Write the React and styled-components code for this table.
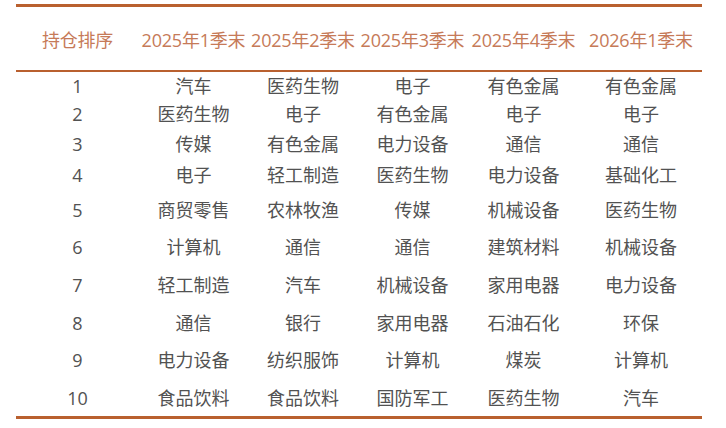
import React from "react";
import styled, { createGlobalStyle } from "styled-components";

const GlobalStyle = createGlobalStyle`
  html, body { margin: 0; padding: 0; background: #ffffff; }
  body { font-family: "Open Sans", "Noto Sans CJK SC", sans-serif; }
`;

const Page = styled.div`
  width: 726px;
  height: 428px;
  padding: 4px 24px 0 16px;
  box-sizing: border-box;
  background: #fff;
`;

const Table = styled.div`
  border-top: 3px solid #b9602f;
  border-bottom: 3px solid #b9602f;
`;

const cols = "123px 109px 110px 109px 113px 122px";

const HeadRow = styled.div`
  display: grid;
  grid-template-columns: ${cols};
  height: 63px;
  align-items: center;
  border-bottom: 2px solid #b9602f;
`;

const HeadCell = styled.div`
  text-align: center;
  font-size: 18px;
  color: #c67a58;
  white-space: nowrap;
  line-height: 1;
  padding-top: 2px;
  letter-spacing: -0.2px;
`;

const Row = styled.div`
  display: grid;
  grid-template-columns: ${cols};
  height: ${(p) => p.$h}px;
  align-items: center;
`;

const Cell = styled.div`
  text-align: center;
  font-size: 18px;
  color: #525252;
  white-space: nowrap;
  line-height: 1;
`;

const headers = ["持仓排序", "2025年1季末", "2025年2季末", "2025年3季末", "2025年4季末", "2026年1季末"];

const rows = [
  ["1", "汽车", "医药生物", "电子", "有色金属", "有色金属"],
  ["2", "医药生物", "电子", "有色金属", "电子", "电子"],
  ["3", "传媒", "有色金属", "电力设备", "通信", "通信"],
  ["4", "电子", "轻工制造", "医药生物", "电力设备", "基础化工"],
  ["5", "商贸零售", "农林牧渔", "传媒", "机械设备", "医药生物"],
  ["6", "计算机", "通信", "通信", "建筑材料", "机械设备"],
  ["7", "轻工制造", "汽车", "机械设备", "家用电器", "电力设备"],
  ["8", "通信", "银行", "家用电器", "石油石化", "环保"],
  ["9", "电力设备", "纺织服饰", "计算机", "煤炭", "计算机"],
  ["10", "食品饮料", "食品饮料", "国防军工", "医药生物", "汽车"],
];

const heights = [27, 30, 30, 32, 37, 38, 38, 37, 38, 37];

export default function App() {
  return (
    <>
      <GlobalStyle />
      <Page>
        <Table>
          <HeadRow>
            {headers.map((h) => (
              <HeadCell key={h}>{h}</HeadCell>
            ))}
          </HeadRow>
          {rows.map((r, i) => (
            <Row key={i} $h={heights[i]}>
              {r.map((c, j) => (
                <Cell key={j}>{c}</Cell>
              ))}
            </Row>
          ))}
        </Table>
      </Page>
    </>
  );
}
